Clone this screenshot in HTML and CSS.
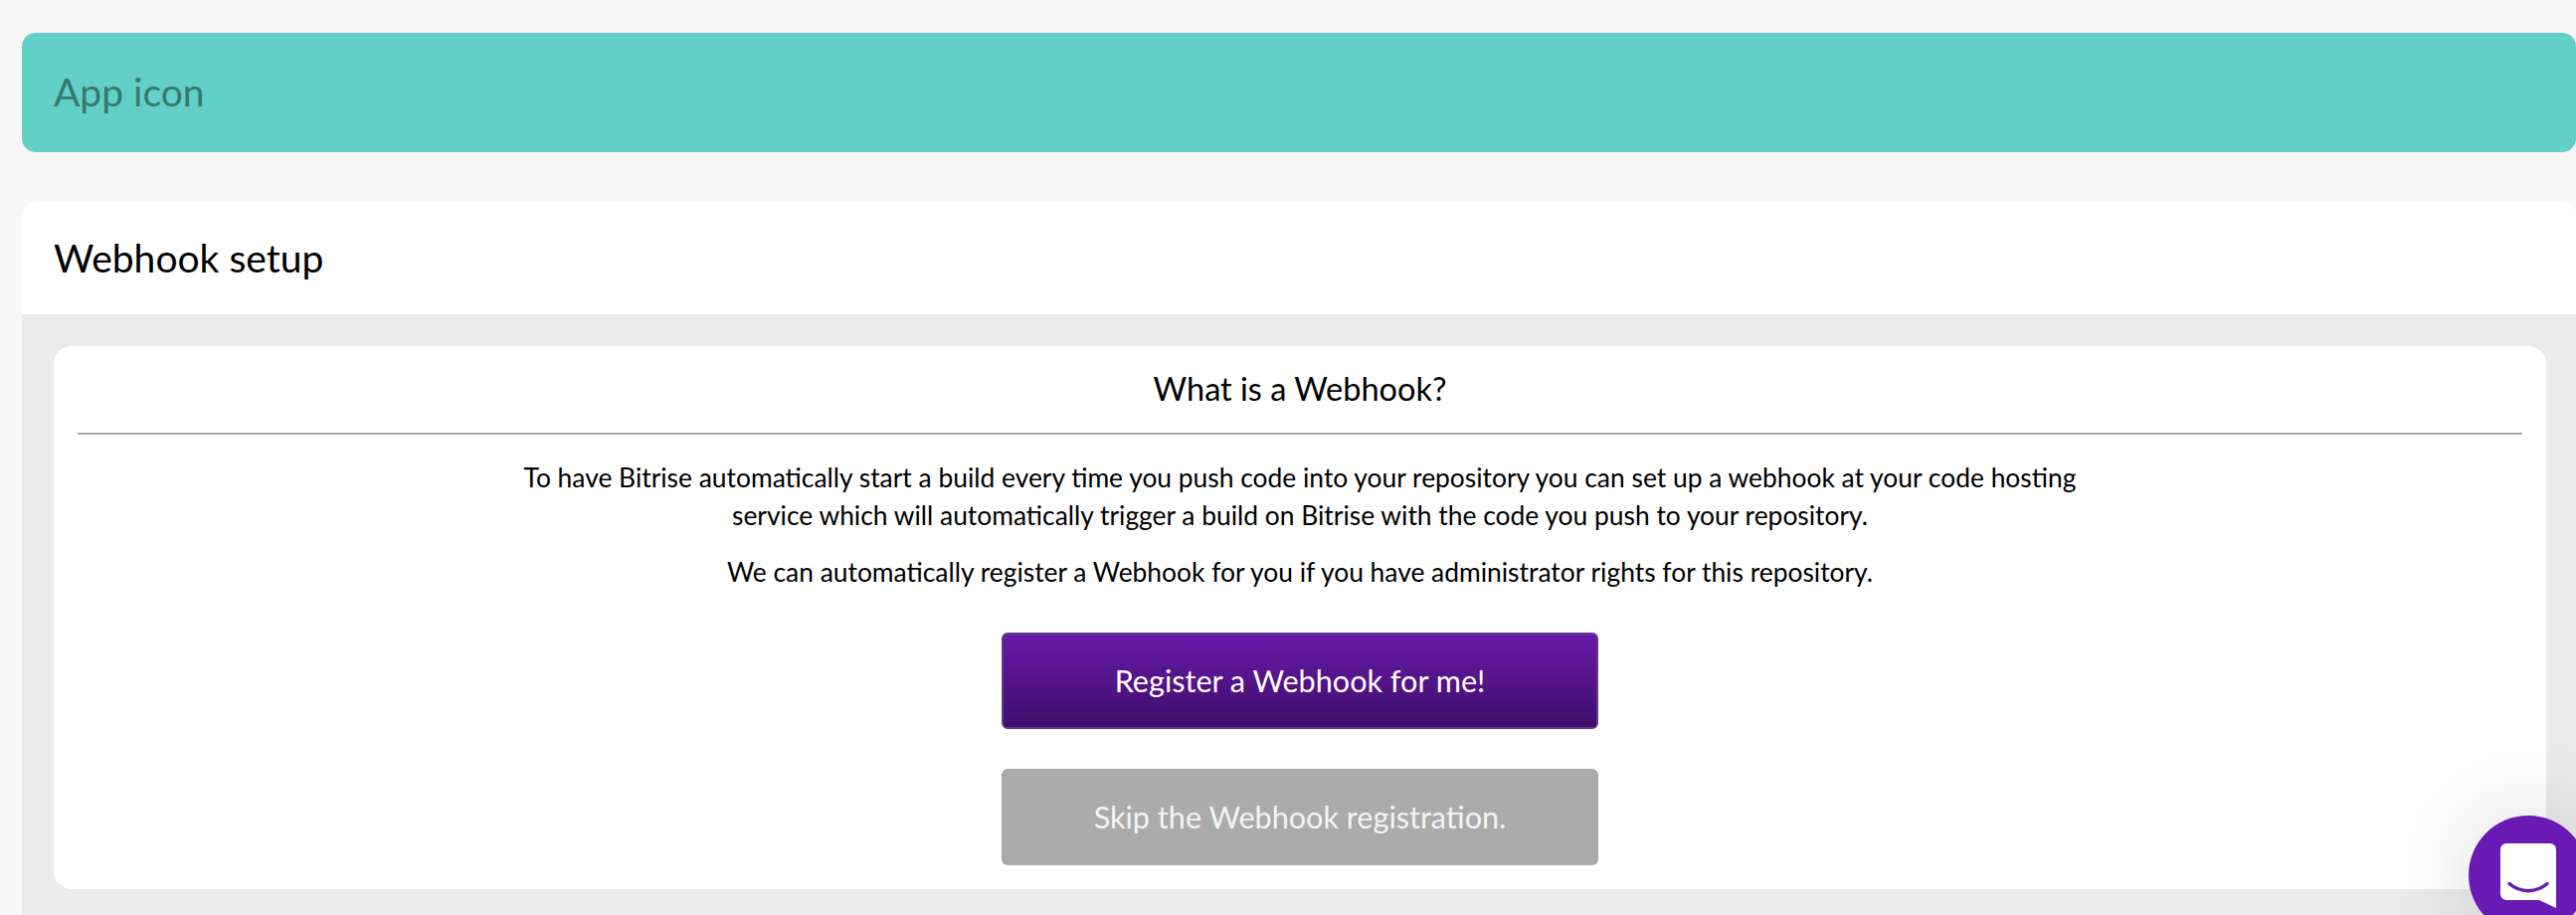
FILE: index.html
```html
<!DOCTYPE html>
<html lang="en">
<head>
  <meta charset="UTF-8">
  <meta name="viewport" content="width=device-width, initial-scale=1.0">
  <title>Webhook setup</title>
  <link rel="stylesheet" href="styles.css">
</head>
<body>
  <div class="page">
    <div class="app-icon-bar">App icon</div>

    <div class="section">
      <h2 class="section-title">Webhook setup</h2>
      <div class="section-body">
        <div class="webhook-card">
          <h3 class="webhook-title">What is a Webhook?</h3>
          <p class="webhook-text">To have Bitrise automatically start a build every time you push code into your repository you can set up a webhook at your code hosting<br>service which will automatically trigger a build on Bitrise with the code you push to your repository.</p>
          <p class="webhook-text second">We can automatically register a Webhook for you if you have administrator rights for this repository.</p>
          <button class="button primary">Register a Webhook for me!</button>
          <button class="button skip">Skip the Webhook registration.</button>
        </div>
      </div>
    </div>
  </div>

  <div class="chat-launcher">
    <svg class="chat-icon" viewBox="0 0 56 65" width="56" height="65">
      <path fill="#fff" d="M6 0H50A6 6 0 0 1 56 6V65L39 57H6A6 6 0 0 1 0 51V6A6 6 0 0 1 6 0Z"/>
      <path fill="none" stroke="#6a1ab4" stroke-width="3.5" stroke-linecap="round" d="M9 40.5C20 50 36 50 47 40.5"/>
    </svg>
  </div>
</body>
</html>
```

FILE: styles.css
```css
html, body {
  margin: 0;
  height: 100%;
  overflow: hidden;
}
body {
  font-family: "Lato", sans-serif;
  background-color: #f8f8f8;
  color: #000;
}
.page {
  padding: 33px 0 0 22px;
}
.app-icon-bar {
  height: 118px;
  padding: 0 0 2px 32px;
  display: flex;
  align-items: center;
  background-color: #62d0c6;
  border-radius: 14px;
  color: #38786f;
  font-size: 39px;
}
.section {
  margin-top: 50px;
  background-color: #ebebeb;
  border-radius: 14px 14px 0 0;
  overflow: hidden;
  height: 717px;
}
.section-title {
  margin: 0;
  height: 111px;
  padding: 0 0 2px 32px;
  display: flex;
  align-items: center;
  background-color: #fff;
  font-size: 39px;
  font-weight: 400;
}
.section-body {
  padding: 32px 30px 0 32px;
}
.webhook-card {
  height: 546px;
  background-color: #fff;
  border-radius: 18px;
  padding: 0 24px;
  display: flex;
  flex-direction: column;
  align-items: center;
  text-align: center;
}
.webhook-title {
  align-self: stretch;
  margin: 0;
  height: 87px;
  line-height: 85px;
  border-bottom: 2px solid #a9a9a9;
  font-size: 32.5px;
  font-weight: 400;
}
.webhook-text {
  margin: 24px 0 0;
  font-size: 26.4px;
  line-height: 38px;
}
.webhook-text.second {
  margin-top: 19px;
}
.button {
  width: 600px;
  height: 97px;
  margin-top: 40px;
  border-radius: 6px;
  color: #fff;
  font-family: inherit;
  font-size: 30.6px;
}
.button.primary {
  margin-top: 42px;
  border: 2px solid #643a88;
  background: linear-gradient(#681aa8, #3f0d6b);
}
.button.skip {
  border: none;
  background-color: #ababab;
  color: #f4f4f4;
}
.chat-launcher {
  position: fixed;
  left: 2482px;
  top: 820px;
  width: 120px;
  height: 120px;
  border-radius: 50%;
  background-color: #6a1ab4;
  box-shadow: 0 0 90px rgba(0, 0, 0, 0.16);
}
.chat-icon {
  position: absolute;
  left: 32px;
  top: 28px;
}
```
